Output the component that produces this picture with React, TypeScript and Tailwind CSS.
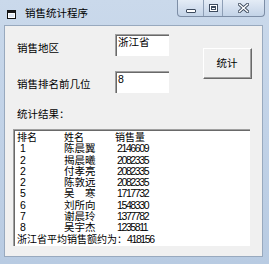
import React from "react";

// 排名数据
const rows = [
  { rank: "1", name: "陈晨翼", sales: "2146609" },
  { rank: "2", name: "揭晨曦", sales: "2082335" },
  { rank: "2", name: "付孝亮", sales: "2082335" },
  { rank: "2", name: "陈敦远", sales: "2082335" },
  { rank: "5", name: "吴　寒", sales: "1717732" },
  { rank: "6", name: "刘所向", sales: "1548330" },
  { rank: "7", name: "谢晨玲", sales: "1377782" },
  { rank: "8", name: "吴宇杰", sales: "1235811" },
];

const cjk = "font-['Liberation_Sans','Noto_Sans_CJK_SC',sans-serif]";

function Digits({ children }: { children: React.ReactNode }) {
  return (
    <span className="font-['Liberation_Sans',sans-serif] text-[10.5px] tracking-[-1.4px]">
      {children}
    </span>
  );
}

function TitleBar() {
  return (
    <div className="relative flex h-[25px] shrink-0 items-center">
      <svg width="9" height="9" viewBox="0 0 9 9" className="ml-[7px] mt-[3px]">
        <rect x="0.5" y="0.5" width="8" height="8" fill="#fff" stroke="#111" />
        <rect x="0.5" y="0.5" width="8" height="2.5" fill="#1a1a1a" />
        <rect x="2" y="4" width="5" height="3" fill="#dfe8f4" />
      </svg>
      <span className={`ml-[9px] mt-[2px] text-[10.5px] text-black ${cjk}`}>
        销售统计程序
      </span>

      {/* 标题栏按钮 */}
      <div className="absolute right-[4px] top-0 flex h-[17px] overflow-hidden rounded-b-[4px] border border-t-0 border-[#7d8ea6] bg-gradient-to-b from-[#e4ecf6] to-[#c3d3e7]">
        <div className="flex w-[26px] items-center justify-center border-r border-[#8e9fb6]">
          <div className="mt-[5px] h-[4px] w-[10px] rounded-[1px] border border-[#3d4b5e] bg-white" />
        </div>
        <div className="flex w-[19px] items-center justify-center border-r border-[#8e9fb6]">
          <div className="h-[8px] w-[9px] border border-[#3d4b5e] bg-white p-[1px]">
            <div className="h-full w-full border border-t-2 border-[#3d4b5e] bg-white" />
          </div>
        </div>
        <div className="flex w-[41px] items-center justify-center">
          <svg width="11" height="10" viewBox="0 0 11 10">
            <path d="M1.5 1.5 L9.5 8.5 M9.5 1.5 L1.5 8.5" stroke="#3d4b5e" strokeWidth="3.2" strokeLinecap="square" />
            <path d="M1.5 1.5 L9.5 8.5 M9.5 1.5 L1.5 8.5" stroke="#fff" strokeWidth="1.4" strokeLinecap="square" />
          </svg>
        </div>
      </div>
    </div>
  );
}

function TextBox({ value }: { value: string }) {
  return (
    <div className="h-[22px] w-[54px] border-t border-l border-[#a0a0a0] border-b-[#fff] border-r-[#fff]">
      <div className="h-full w-full border-t border-l border-[#696969] border-b-[#e3e3e3] border-r-[#e3e3e3] bg-white px-[1px] text-[10.5px] leading-[13px] text-black">
        {value}
      </div>
    </div>
  );
}

export default function App() {
  return (
    <div
      className={`flex h-[264px] w-[269px] flex-col bg-gradient-to-b from-[#cad9eb] via-[#c1d2e7] to-[#b8cbe2] ${cjk}`}
    >
      <TitleBar />

      {/* 客户区 */}
      <div className="ml-[4px] mr-[6px] mb-[7px] flex-1 border border-[#98a9be] bg-[#f0f0f0] pl-[8px] text-[10.5px] text-black">
        <div className="flex">
          <div className="flex flex-col">
            <div className="mt-[8px] flex h-[22px]">
              <div className="w-[102px] pl-[4px] pt-[8px] leading-[12px]">销售地区</div>
              <TextBox value="浙江省" />
            </div>
            <div className="mt-[15px] flex h-[22px]">
              <div className="w-[102px] pl-[4px] pt-[7px] leading-[12px]">销售排名前几位</div>
              <TextBox value="8" />
            </div>
          </div>
          <div className="ml-[34px] mt-[22px] h-[31px] w-[49px] border-r border-b border-[#696969] border-t-[#fff] border-l-[#fff] border-t border-l">
            <div className="flex h-full w-full items-center justify-center border-r border-b border-[#a0a0a0] border-t-0 border-l-0 bg-[#f0f0f0] leading-[12px]">
              统计
            </div>
          </div>
        </div>

        <div className="mt-[15px] pl-[4px] leading-[12px]">统计结果：</div>

        {/* 结果列表 */}
        <div className="mt-[9px] h-[117px] w-[237px] border-t border-l border-[#a0a0a0] border-b-[#fff] border-r-[#fff]">
          <div className="h-full w-full overflow-hidden border-t border-l border-[#696969] border-b-[#e3e3e3] border-r-[#e3e3e3] bg-white pl-[2px] pt-[1px] text-[10px] leading-[11.3px]">
            <div className="grid h-[11.3px] grid-cols-[47px_51px_1fr]">
              <div>排名</div>
              <div>姓名</div>
              <div>销售量</div>
            </div>
            {rows.map((r, i) => (
              <div key={i} className="grid h-[11.3px] grid-cols-[47px_51px_1fr] items-start">
                <div className="h-[11.3px] pl-[3px]">
                  <Digits>{r.rank}</Digits>
                </div>
                <div className="h-[11.3px] text-[10.5px]">{r.name}</div>
                <div className="h-[11.3px] pl-[2px]">
                  <Digits>{r.sales}</Digits>
                </div>
              </div>
            ))}
            <div className="h-[10px] leading-[11px]">
              浙江省平均销售额约为：<Digits>418156</Digits>
            </div>
          </div>
        </div>
      </div>
    </div>
  );
}
